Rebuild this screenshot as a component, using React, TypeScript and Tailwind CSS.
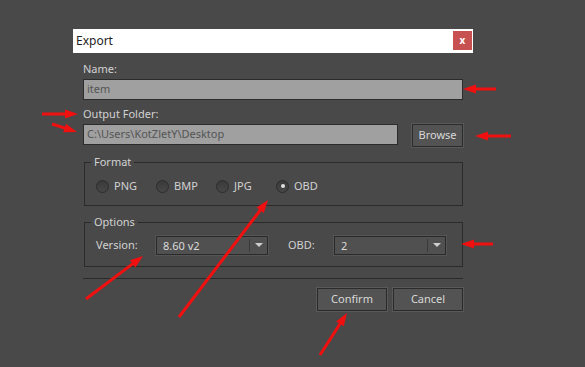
import React from 'react';

const font = { fontFamily: '"Noto Sans", "Open Sans", sans-serif' };

type Arrow = [number, number, number, number];

// red annotation arrows drawn over the screenshot: [fromX, fromY, toX, toY], head at "to"
const arrows: Arrow[] = [
  [496, 89, 463, 89],
  [42, 114, 78, 114],
  [52, 124, 77, 132],
  [511, 136, 475, 136],
  [179, 317, 268, 200],
  [86, 299, 143, 256],
  [493, 244, 461, 244],
  [320, 355, 347, 313],
];

function ArrowMark({ a }: { a: Arrow }) {
  const [x1, y1, x2, y2] = a;
  const dx = x2 - x1;
  const dy = y2 - y1;
  const len = Math.hypot(dx, dy);
  const ux = dx / len;
  const uy = dy / len;
  const hl = 13;
  const hw = 4.5;
  const bx = x2 - ux * hl;
  const by = y2 - uy * hl;
  const pts = `${x2},${y2} ${bx - uy * hw},${by + ux * hw} ${bx + uy * hw},${by - ux * hw}`;
  return (
    <g>
      <line x1={x1} y1={y1} x2={bx + ux * 2} y2={by + uy * 2} stroke="#f01010" strokeWidth={3} />
      <polygon points={pts} fill="#f01010" />
    </g>
  );
}

function Radio({ label, checked }: { label: string; checked?: boolean }) {
  return (
    <div className="flex items-center w-[60px] gap-[5px]">
      <span className="w-[13px] h-[13px] rounded-full border border-[#2c2c2c] bg-gradient-to-b from-[#3a3a3a] to-[#474747] flex items-center justify-center">
        {checked && <span className="w-[4px] h-[4px] rounded-full bg-[#e0e0e0]" />}
      </span>
      <span className="text-[11px] leading-[14px] text-[#d2d2d2]">{label}</span>
    </div>
  );
}

function Combo({ value }: { value: string }) {
  return (
    <div className="w-[112px] h-[19px] border border-[#2a2a2a] bg-[#505050] flex items-center shadow-[0_0_0_1px_#555]">
      <span className="flex-1 pl-[6px] text-[11px] leading-[14px] text-[#dadada]">{value}</span>
      <span className="w-px h-[13px] bg-[#3a3a3a]" />
      <span className="w-[17px] flex items-center justify-center">
        <svg width="8" height="5" viewBox="0 0 8 5">
          <polygon points="0,0 8,0 4,4" fill="#cfcfcf" />
        </svg>
      </span>
    </div>
  );
}

function Button({ label, w }: { label: string; w: string }) {
  return (
    <button
      className={`${w} h-[23px] border border-[#2b2b2b] bg-[#535353] text-[11px] text-[#d8d8d8] shadow-[0_0_0_1px_#595959]`}
    >
      {label}
    </button>
  );
}

export default function App() {
  return (
    <div className="relative w-[585px] h-[367px] bg-[#494949] pt-[29px] pl-[73px] overflow-hidden" style={font}>
      <div className="w-[400px]">
        <div className="h-[24px] bg-white flex items-start justify-between">
          <span className="pl-[3px] pt-[3px] text-[12px] leading-[17px] text-[#1e1e1e]">Export</span>
          <span className="mt-[2px] mr-[1px] w-[19px] h-[19px] bg-[#c75050] flex items-center justify-center text-white text-[10px] font-bold leading-none pb-[2px]">
            x
          </span>
        </div>

        <div className="px-[10px]">
          <div className="mt-[9px] text-[11px] leading-[14px] text-[#d2d2d2]">Name:</div>
          <div className="mt-[3px] h-[21px] bg-[#a0a0a0] border border-[#2c2c2c] flex items-center pl-[3px] text-[11px] text-[#555]">
            item
          </div>

          <div className="mt-[7px] text-[11px] leading-[14px] text-[#d2d2d2]">Output Folder:</div>
          <div className="mt-[3px] flex items-start justify-between">
            <div className="w-[315px] h-[21px] bg-[#a0a0a0] border border-[#2c2c2c] flex items-center pl-[3px] text-[11px] text-[#555]">
              C:\Users\KotZletY\Desktop
            </div>
            <Button label="Browse" w="w-[51px] h-[22px]" />
          </div>

          <fieldset className="mt-[8px] ml-px w-[379px] border border-[#2b2b2b] px-[6px] pb-[12px]">
            <legend className="px-[3px] text-[11px] leading-[14px] text-[#d2d2d2]">Format</legend>
            <div className="mt-[10px] pl-[5px] flex items-center">
              <Radio label="PNG" />
              <Radio label="BMP" />
              <Radio label="JPG" />
              <Radio label="OBD" checked />
            </div>
          </fieldset>

          <fieldset className="mt-[9px] ml-px w-[379px] border border-[#2b2b2b] px-[6px] pb-[11px]">
            <legend className="px-[3px] text-[11px] leading-[14px] text-[#d2d2d2]">Options</legend>
            <div className="mt-[7px] pl-[5px] flex items-center">
              <span className="w-[60px] text-[11px] text-[#d2d2d2]">Version:</span>
              <Combo value="8.60 v2" />
              <span className="ml-[20px] w-[46px] text-[11px] text-[#d2d2d2]">OBD:</span>
              <Combo value="2" />
            </div>
          </fieldset>

          <div className="mt-[11px] h-px bg-[#2a2a2a]" />

          <div className="mt-[9px] flex justify-end gap-[6px]">
            <Button label="Confirm" w="w-[70px]" />
            <Button label="Cancel" w="w-[70px]" />
          </div>
        </div>
      </div>

      <svg className="absolute inset-0 pointer-events-none" width="585" height="367">
        {arrows.map((a, i) => (
          <ArrowMark key={i} a={a} />
        ))}
      </svg>
    </div>
  );
}
